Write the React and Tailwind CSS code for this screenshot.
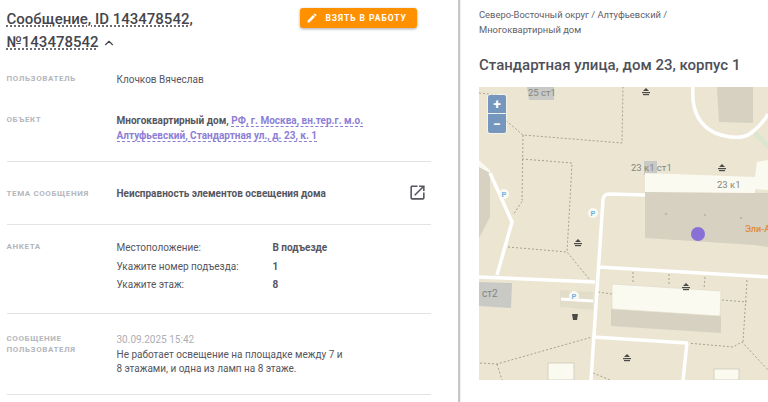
import React from 'react';
import { ChevronUp } from 'lucide-react';

const FONT = { fontFamily: 'Roboto, sans-serif' };

const Label = ({ children }) => (
  <div className="w-[110px] shrink-0 text-[8px] leading-[11px] font-bold tracking-[0.6px] text-[#b4b6bc] uppercase">{children}</div>
);

const Tree = ({ x, y }) => (
  <g transform={`translate(${x} ${y})`} fill="#4a4a48">
    <path d="M0 -4 L3 -1 L-3 -1 Z" />
    <rect x="-4" y="0" width="8" height="1.2" />
    <rect x="-3" y="2" width="6" height="1.2" />
  </g>
);

const Park = ({ x, y }) => (
  <g transform={`translate(${x} ${y})`}>
    <circle r="5" fill="#fbfaf2" />
    <text textAnchor="middle" y="3" fontSize="7.5" fontWeight="700" fill="#6fb4e8" fontFamily="Roboto, sans-serif">P</text>
  </g>
);

const Dash = ({ d }) => (
  <path d={d} fill="none" stroke="#a9a18a" strokeWidth="1" strokeDasharray="2 2" />
);

const Road = ({ d, w = 3.5 }) => (
  <path d={d} fill="none" stroke="#ffffff" strokeWidth={w} strokeLinejoin="round" />
);

const MapDrawing = () => (
  <svg viewBox="0 0 289 293" width="289" height="293" className="block">
    <rect width="289" height="293" fill="#ebe5d2" />

    {/* dashed plot borders */}
    <Dash d="M0 6 L18 8 L18 26 L44 48 L143 56 L144 0" />
    <Dash d="M44 48 L43 113 L44 113 L34 128" />
    <Dash d="M43 72 L93 76 L91 113 L88 165 L111 193" />
    <Dash d="M29 160 L88 165" />
    <Dash d="M1 276 L18 277 L113 250" />
    <Dash d="M18 277 L23 293" />
    <Dash d="M114 286 L131 293" />
    <Dash d="M208 256 L254 260 L263 255 L289 283" />
    <Dash d="M268 193 L264 255" />
    <Dash d="M243 213 L268 215" />
    <Dash d="M119 205 L133 207" />
    <Dash d="M154 185 L154 197" />
    <Dash d="M190 187 L190 199" />
    <Dash d="M226 190 L225 202" />

    {/* buildings */}
    <path d="M48 0 H75 V13 H50 Z" fill="#c9c9c6" />
    <path d="M238 0 H274 V36 L240 35 Z" fill="#d6d1c0" />
    <path d="M278 44 L289 56 V62 L274 48 Z" fill="#dbe6d0" />
    <path d="M0 73 L11 83 V130 L0 151 Z" fill="#d6d1c0" />
    <path d="M0 73 L11 83 V86 L0 80 Z" fill="#fbfaf0" />
    <rect x="165" y="74" width="13" height="14" fill="#c9c9c6" />
    <path d="M166 104 L289 106 V160 L276 158 L166 151 Z" fill="#d6d1c0" />
    <path d="M166 86 L276 90 L278 75 L289 73 V103 L276 102 V106 L166 105 Z" fill="#fbfaf0" />
    <path d="M0 195 L33 196 L32 221 L0 219 Z" fill="#c9c9c6" />
    <path d="M132 222 L242 229 L242 246 L132 239 Z" fill="#d6d1c0" />
    <path d="M133 197 L242 204 L241 229 L133 222 Z" fill="#fbfaf0" stroke="#ddd8c6" strokeWidth="0.6" />
    <path d="M81 203 L114 205 V223 L81 220 Z" fill="#e1ddc9" />
    <rect x="69" y="276" width="26" height="17" fill="#fbfaf0" stroke="#d6d1c0" />
    <rect x="235" y="282" width="25" height="11" fill="#fbfaf0" stroke="#d6d1c0" />

    {/* roads */}
    <Road d="M214 0 C212 24 220 38 236 46 C250 51 264 52 272 46 C280 40 285 34 289 27" />
    <Road d="M11 86 L33 135 L18 188" />
    <Road d="M0 190 L116 195" />
    <Road d="M166 108 L130 107 C126 107 124 110 124 113 L112 293" />
    <Road d="M119 180 L289 190" />
    <Road d="M114 250 L208 256 L204 293" />
    <Road d="M82 212 L114 214" w={3} />

    <circle cx="187" cy="127" r="1.2" fill="#bdb8a8" />
    <circle cx="226" cy="128" r="1.2" fill="#bdb8a8" />
    <circle cx="262" cy="131" r="1.2" fill="#bdb8a8" />

    {/* map icons */}
    <Tree x={167} y={5} />
    <Tree x={243} y={81} />
    <Tree x={99} y={156} />
    <Tree x={207} y={200} />
    <Tree x={148} y={271} />
    <Park x={25} y={107} />
    <Park x={114} y={126} />
    <Park x={95} y={209} />
    <path d="M93 227 H99 L98 233 H94 Z" fill="#4a4a48" />

    {/* labels */}
    <g fontFamily="Roboto, sans-serif" fill="#85857f">
      <text x="49" y="9" fontSize="9.500">25 ст1</text>
      <text x="152" y="84" fontSize="9.500">23 к1 ст1</text>
      <text x="238" y="101" fontSize="9.500">23 к1</text>
      <text x="3" y="210" fontSize="10">ст2</text>
    </g>
    <text x="266" y="145" fontSize="9" fontWeight="500" fill="#e08a3c" fontFamily="Roboto, sans-serif">Эли-А</text>

    <circle cx="219" cy="147" r="7" fill="#8a70d6" />
  </svg>
);

export default function App() {
  return (
    <div className="flex w-[768px] h-[402px] overflow-hidden bg-white text-[#55565f]" style={FONT}>
      {/* left column */}
      <div className="w-[458px] shrink-0 pl-[6.5px]">
        <div className="w-[424px]">
          <div className="flex justify-between pt-[8px]">
            <div className="w-[240px] text-[15px] leading-[23px] font-medium text-[#45464d]">
              <span className="underline decoration-dotted decoration-[#3c3c44] underline-offset-[2px]">Сообщение, ID 143478542, №143478542</span>
              <ChevronUp size={14} strokeWidth={2} className="inline ml-[3px] mb-[1px]" />
            </div>
            <button className="flex items-center h-[20px] w-[117px] mr-[14px] pl-[6.5px] gap-[7.5px] rounded-[3px] bg-[#ff9100] text-white text-[8.5px] font-bold tracking-[0.95px] shadow-[0_1px_3px_rgba(0,0,0,0.35)]">
              <svg viewBox="0 0 24 24" width="12" height="12" fill="#fff">
                <path d="M3 17.25V21h3.75L17.81 9.94l-3.75-3.75L3 17.25zM20.71 7.04c.39-.39.39-1.02 0-1.41l-2.34-2.34c-.39-.39-1.02-.39-1.41 0l-1.83 1.83 3.75 3.75 1.83-1.83z" />
              </svg>
              ВЗЯТЬ В РАБОТУ
            </button>
          </div>

          <div className="flex pt-[19px] h-[55px]">
            <Label>Пользователь</Label>
            <div className="text-[10px] leading-[14px]">Клочков Вячеслав</div>
          </div>

          <div className="flex pt-[5px] h-[53px] border-b border-[#e3e3e6]">
            <Label>Объект</Label>
            <div className="w-[262px] text-[10px] leading-[14.5px] font-bold">
              Многоквартирный дом,{' '}
              <span className="text-[#8d7ed6] border-b border-dashed border-[#8d7ed6]">РФ, г. Москва, вн.тер.г. м.о. Алтуфьевский, Стандартная ул., д. 23, к. 1</span>
            </div>
          </div>

          <div className="flex items-center h-[63px] border-b border-[#e3e3e6]">
            <Label>Тема сообщения</Label>
            <div className="flex-1 text-[10px] font-bold">Неисправность элементов освещения дома</div>
            <svg viewBox="0 0 24 24" width="19" height="19" fill="#55565f" className="mr-[4px] mb-[2px]">
              <path d="M19 19H5V5h7V3H5c-1.11 0-2 .9-2 2v14c0 1.1.89 2 2 2h14c1.1 0 2-.9 2-2v-7h-2v7zM14 3v2h3.59l-9.83 9.83 1.41 1.41L19 6.41V10h2V3h-7z" />
            </svg>
          </div>

          <div className="flex pt-[16px] h-[89px] border-b border-[#e3e3e6]">
            <Label>Анкета</Label>
            <div className="grid grid-cols-[156px_1fr] content-start -mt-[2px] text-[10px] leading-[18.5px]">
              <div>Местоположение:</div>
              <div className="font-bold">В подъезде</div>
              <div>Укажите номер подъезда:</div>
              <div className="font-bold">1</div>
              <div>Укажите этаж:</div>
              <div className="font-bold">8</div>
            </div>
          </div>

          <div className="flex pt-[19px] h-[81px] border-b border-[#e3e3e6]">
            <Label>Сообщение пользователя</Label>
            <div className="w-[232px] text-[10px] leading-[14.5px]">
              <div className="text-[#adaeb4]">30.09.2025 15:42</div>
              <div>Не работает освещение на площадке между 7 и 8 этажами, и одна из ламп на 8 этаже.</div>
            </div>
          </div>
        </div>
      </div>

      {/* divider */}
      <div className="w-[2px] shrink-0 bg-[#c6c6cd]" />
      <div className="w-[1px] shrink-0 bg-[#f0f0f0]" />

      {/* right column */}
      <div className="flex-1 pl-[18px] min-w-0">
        <div className="pt-[8px] w-[240px] text-[9.4px] leading-[14.5px] text-[#5f6068]">
          Северо-Восточный округ / Алтуфьевский / Многоквартирный дом
        </div>
        <h1 className="mt-[18px] text-[15px] leading-[20px] font-medium text-[#4f5059] whitespace-nowrap">Стандартная улица, дом 23, корпус 1</h1>
        <div className="relative mt-[12px] w-[289px] h-[293px] overflow-hidden">
          <MapDrawing />
          <div className="absolute left-[8px] top-[7px] w-[20px] rounded-[3px] bg-white/50 p-[1px]">
            <div className="flex items-center justify-center h-[18px] rounded-t-[2px] bg-[#7596bd] text-white text-[14px] leading-none font-bold">+</div>
            <div className="flex items-center justify-center h-[19px] mt-[1px] rounded-b-[2px] bg-[#7596bd] text-white text-[14px] leading-none font-bold">−</div>
          </div>
        </div>
      </div>
    </div>
  );
}
